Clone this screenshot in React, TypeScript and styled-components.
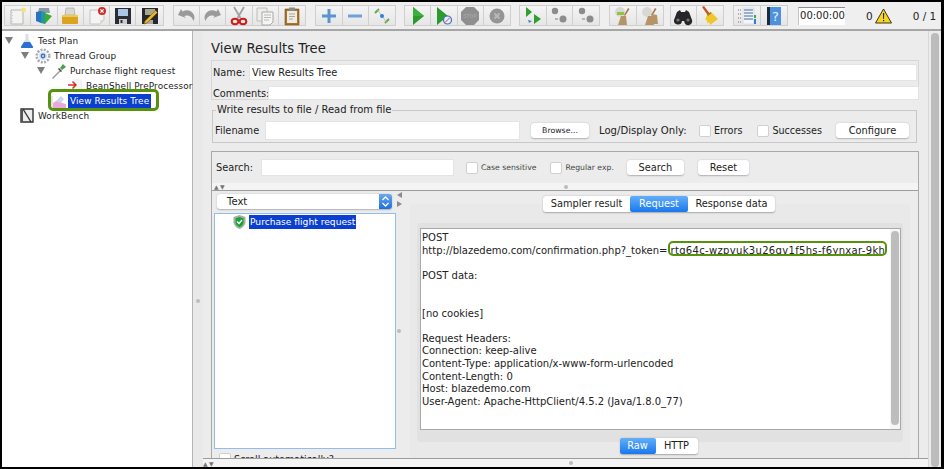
import React from "react";
import styled, { createGlobalStyle } from "styled-components";

const GlobalStyle = createGlobalStyle`
  html, body { margin: 0; padding: 0; background: #000; }
  * { box-sizing: border-box; }
`;

const uiFont = `"DejaVu Sans", "Liberation Sans", sans-serif`;

/* ---------- toolbar icons ---------- */
const IconSvg = styled.svg`
  width: 20px;
  height: 20px;
  display: block;
`;

function Ic({ children }: { children: React.ReactNode }) {
  return <IconSvg viewBox="0 0 20 20">{children}</IconSvg>;
}

const NewIcon = () => (
  <Ic>
    <path d="M3 4h12v14H3z" fill="#f3f3f1" stroke="#b5b5b0" />
    <path d="M4.5 6v10" stroke="#d0d0cc" strokeDasharray="1 2" />
    <circle cx="15.5" cy="4" r="2.4" fill="#f6e27a" />
  </Ic>
);
const TemplatesIcon = () => (
  <Ic>
    <path d="M5 2h10l1 5H4z" fill="#8d9aa5" />
    <path d="M2 6l5-1v12l-5-2z" fill="#2d6fc0" />
    <path d="M7 5l4 1v12l-4-1z" fill="#1f9a9c" />
    <path d="M11 7l7 3-7 8z" fill="#3cab2e" />
  </Ic>
);
const OpenIcon = () => (
  <Ic>
    <path d="M6 2h8l1 7H5z" fill="#d8d8d4" stroke="#a0a09a" strokeWidth=".6" />
    <path d="M2 9h16v8a1 1 0 0 1-1 1H3a1 1 0 0 1-1-1z" fill="#dba41e" />
    <path d="M2 9h16v2H2z" fill="#f0c94f" />
  </Ic>
);
const CloseIcon = () => (
  <Ic>
    <path d="M3 4h14v10l-4 4H3z" fill="#f4f4f2" stroke="#c4c4c0" />
    <path d="M13 18l.5-4H17z" fill="#d8d8d4" />
    <circle cx="15" cy="5" r="4" fill="#cf2b27" />
    <path d="M13.4 3.4l3.2 3.2M16.6 3.4l-3.2 3.2" stroke="#fff" strokeWidth="1.3" />
  </Ic>
);
const SaveIcon = () => (
  <Ic>
    <path d="M2 2h16v16H2z" fill="#2a2d33" />
    <path d="M5 3h10v7H5z" fill="#a9c6e4" />
    <path d="M6 13h8v5H6z" fill="#c9cbce" />
    <path d="M7.5 14h2v3h-2z" fill="#2a2d33" />
  </Ic>
);
const SaveAsIcon = () => (
  <Ic>
    <path d="M2 2h16v16H2z" fill="#26282c" />
    <path d="M5 3h10v6H5z" fill="#a9a68e" />
    <path d="M6 14h7v4H6z" fill="#a8a8a4" />
    <path d="M15.5 4.5l2 2L7 17l-3 1 1-3z" fill="#e8b52c" stroke="#7a5b0d" strokeWidth=".6" />
  </Ic>
);
const UndoIcon = ({ flip }: { flip?: boolean }) => (
  <Ic>
    <path
      transform={flip ? "matrix(-1 0 0 1 20 0)" : undefined}
      d="M2 9l3-6 1.500 2.500C11 3 16 4.500 18 9c.8 2 .5 4-.5 6-1-3-3-5-5.500-5.500-1.500-.3-2.800 0-3.800.6L10 12z"
      fill="#9a9a9a"
    />
  </Ic>
);
const CutIcon = () => (
  <Ic>
    <path d="M5 1l6.500 11M15 1L8.500 12" stroke="#9ea2a6" strokeWidth="1.800" />
    <ellipse cx="6" cy="15.500" rx="3.300" ry="2.700" fill="none" stroke="#c8201c" strokeWidth="2" />
    <ellipse cx="14" cy="15.500" rx="3.300" ry="2.700" fill="none" stroke="#c8201c" strokeWidth="2" />
  </Ic>
);
const CopyIcon = () => (
  <Ic>
    <path d="M2 2h10v13H2z" fill="#ededeb" stroke="#bcbcb8" />
    <path d="M7 6h11v10l-3 3H7z" fill="#f5f5f3" stroke="#a8a8a4" />
    <path d="M9 9h7M9 11.500h7M9 14h5" stroke="#b8b8b4" />
  </Ic>
);
const PasteIcon = () => (
  <Ic>
    <path d="M3 3h14v16H3z" fill="#a9732a" stroke="#7c5118" strokeWidth=".6" />
    <path d="M5 5h10v12H5z" fill="#ecebe4" />
    <path d="M7 1.500h6V5H7z" fill="#8a8a86" />
    <path d="M7 8h6M7 10.500h6M7 13h4" stroke="#a8a8a2" />
  </Ic>
);
const PlusIcon = () => (
  <Ic>
    <path d="M8.500 3h3v5.500H17v3h-5.500V17h-3v-5.500H3v-3h5.500z" fill="#5b93cf" />
  </Ic>
);
const MinusIcon = () => (
  <Ic>
    <path d="M3 8.500h14v3H3z" fill="#6ea1d6" />
  </Ic>
);
const ToggleIcon = () => (
  <Ic>
    <path d="M3 7L7 3M13 17l4-4" stroke="#64a84e" strokeWidth="2" fill="none" />
    <path d="M5 3L15 17" stroke="#b4b8b4" strokeWidth=".8" fill="none" />
    <circle cx="10" cy="10" r="2" fill="#2f7fe0" />
  </Ic>
);
const PlayIcon = () => (
  <Ic>
    <path d="M5 1l11 9-11 9z" fill="#2c9a2c" />
    <path d="M5 1l11 9H5z" fill="#3bb13b" />
  </Ic>
);
const PlayNoTimerIcon = () => (
  <Ic>
    <path d="M3 1l11 9-11 9z" fill="#2c9a2c" />
    <circle cx="13.500" cy="14" r="4" fill="#e8eef8" stroke="#3a6fc4" strokeWidth="1.200" />
    <path d="M11 16.500l5-5" stroke="#d04040" strokeWidth="1" />
  </Ic>
);
const StopIcon = () => (
  <Ic>
    <path d="M6 1h8l5 5v8l-5 5H6l-5-5V6z" fill="#8f8f8f" />
    <text x="10" y="12" fontSize="5" fontWeight="700" fill="#a4a4a4" textAnchor="middle" fontFamily="Liberation Sans">
      STOP
    </text>
  </Ic>
);
const ShutdownIcon = () => (
  <Ic>
    <circle cx="10" cy="10" r="7.500" fill="#959595" />
    <path d="M7.500 7.500l5 5M12.500 7.500l-5 5" stroke="#b8b8b8" strokeWidth="2" />
  </Ic>
);
const RemoteStartIcon = () => (
  <Ic>
    <path d="M3 1l6 5-6 5zM11 8l7 5-7 5z" fill="#2f9f2f" />
    <path d="M5 14l4 1-3 2z" fill="#4b7fc4" />
  </Ic>
);
const RemoteStopIcon = () => (
  <Ic>
    <circle cx="6" cy="5" r="3.200" fill="#8c8c8c" />
    <circle cx="14" cy="13" r="3.500" fill="#8c8c8c" />
    <path d="M6 13h3" stroke="#a8a8a8" strokeWidth="1.600" />
  </Ic>
);
const BroomGearIcon = ({ tall }: { tall?: boolean }) => (
  <Ic>
    <circle cx="7" cy="6" r="5" fill="#d8d8d4" />
    {!tall && <path d="M4 6h7v3H4z" fill="#8cc63f" />}
    <path d="M15 2l1.500 1L12 10l-1-1z" fill="#a5794a" />
    <path d="M8 10l5 0 1 9H5z" fill="#b79468" />
    {tall && <path d="M12 8l5 1 1 9h-5z" fill="#b79468" />}
  </Ic>
);
const BinocularsIcon = () => (
  <Ic>
    <path d="M4 6l3-2 1 2h4l1-2 3 2 3 8a4 4 0 1 1-7.800 1H9a4 4 0 1 1-8-1z" fill="#26262a" />
    <circle cx="5" cy="14" r="1.600" fill="#77797e" />
    <circle cx="15" cy="14" r="1.600" fill="#77797e" />
  </Ic>
);
const BroomIcon = () => (
  <Ic>
    <path d="M2 1l2-1 6 8-2 1.500z" fill="#c4541f" />
    <path d="M7 9l4-3 7 7-8 6-1-3-1.500 1.500-1-4-1.500.5z" fill="#efc72b" />
    <path d="M7 8.500l3.500-2.500 1 1.300-3.500 2.600z" fill="#b7701f" />
  </Ic>
);
const ListIcon = () => (
  <Ic>
    <path d="M1 4h3M1 8h3M1 12h3M1 16h3" stroke="#9a9a9a" strokeWidth="1.500" strokeDasharray="1 1" />
    <path d="M6 2h11v16H6z" fill="#f4f6f8" stroke="#c4c8cc" strokeWidth=".5" />
    <path d="M7 4h9M7 7h9M7 10h9M7 13h9" stroke="#3f67a8" strokeWidth="1.200" />
    <path d="M17 13h2v5h-2z" fill="#2b7fd8" />
    <path d="M17 9h2v3h-2z" fill="#48a838" />
  </Ic>
);
const HelpIcon = () => (
  <Ic>
    <path d="M3 1h3v18H3z" fill="#1c2a3c" />
    <path d="M6 1h11v18H6z" fill="#4d90dc" />
    <text x="11.500" y="15" fontSize="13" fill="#e6f0fa" textAnchor="middle" fontFamily="DejaVu Sans">?</text>
  </Ic>
);
const WarnIcon = () => (
  <svg width="17" height="16" viewBox="0 0 17 16">
    <path d="M8.500 1L16.500 15H.5z" fill="#f5d327" stroke="#3a3410" strokeWidth="1" strokeLinejoin="round" />
    <path d="M8 5h1.200l-.2 6h-.8zM8 12h1.200v1.300H8z" fill="#222" />
  </svg>
);

/* ---------- tree icons ---------- */
const FlaskIcon = () => (
  <svg width="14" height="14" viewBox="0 0 14 14">
    <path d="M5.500 0h3v5l4 7a1 1 0 0 1-1 2h-9a1 1 0 0 1-1-2l4-7z" fill="#d9dfe8" />
    <path d="M4 8h6l2.500 4a1 1 0 0 1-1 2h-9a1 1 0 0 1-1-2z" fill="#2d6fd0" />
  </svg>
);
const GearIcon = () => (
  <svg width="16" height="16" viewBox="0 0 16 16">
    <circle cx="8" cy="8" r="6.300" fill="none" stroke="#a6adb5" strokeWidth="2.600" strokeDasharray="2 1.300" />
    <circle cx="8" cy="8" r="4" fill="#dbe2ea" />
    <circle cx="8" cy="8" r="2.400" fill="#3c73b8" />
    <circle cx="8" cy="8" r="1" fill="#dbe6f4" />
  </svg>
);
const DropperIcon = () => (
  <svg width="16" height="16" viewBox="0 0 16 16">
    <path d="M1 15l8-8 1 1-8 8z" fill="#9a9a9a" />
    <path d="M9 5l3-4 3 3-4 3z" fill="#4f9e50" />
    <path d="M8 5l3 3-1 1-3-3z" fill="#3c4a3c" />
  </svg>
);
const PreIcon = () => (
  <svg width="16" height="16" viewBox="0 0 16 16">
    <path d="M6 1h9v14H6z" fill="#f3f3f3" />
    <path d="M1 7h7M5.500 3.500L9 7l-3.500 3.500" stroke="#d4312c" strokeWidth="1.500" fill="none" />
  </svg>
);
const ResultsIcon = () => (
  <svg width="16" height="16" viewBox="0 0 16 16">
    <path d="M1 15V3" stroke="#c9c9c9" />
    <path d="M2 15V10l5-3 4 3 4 1v4z" fill="#e9a8dc" />
    <path d="M5 8l5-5 3 3-3 4z" fill="#c8d8ee" />
  </svg>
);
const BenchIcon = () => (
  <svg width="14" height="15" viewBox="0 0 14 15">
    <path d="M1 1h12v13H1z" fill="#eee" stroke="#333" strokeWidth="1.400" />
    <path d="M3 1l8 13" stroke="#333" strokeWidth="1.400" />
    <path d="M1 1l2 0v13H1z" fill="#555" />
  </svg>
);
const ShieldIcon = () => (
  <svg width="13" height="14" viewBox="0 0 13 14">
    <path d="M6.500 0l6 2v5c0 3-3 6-6 7-3-1-6-4-6-7V2z" fill="#a8aca8" />
    <path d="M6.500 2l4 1.400v3.800c0 2-2 4-4 5-2-1-4-3-4-5V3.400z" fill="#16a52e" />
    <path d="M4 6.500l2 2 3-3.500" stroke="#fff" strokeWidth="1.400" fill="none" />
  </svg>
);

/* ---------- page ---------- */
const Frame = styled.div`
  position: relative;
  width: 944px;
  height: 469px;
  padding: 2px 3px 2px 2px;
  background: #000;
  overflow: hidden;
  display: flex;
  flex-direction: column;
  font-family: ${uiFont};
  color: #222;
`;

const Toolbar = styled.div`
  height: 29px;
  flex: none;
  display: flex;
  align-items: center;
  padding-left: 2px;
  background: #efefef;
  border-bottom: 2px solid #a6a6a6;
`;

const ToolGroup = styled.div`
  display: flex;
  height: 21px;
  border: 1px solid #cfcfcf;
  background: #e9e9e9;
`;

const ToolButton = styled.div`
  width: 26.300px;
  display: flex;
  align-items: center;
  justify-content: center;
  border-right: 1px solid #cfcfcf;
  background: linear-gradient(#f4f4f4, #e6e6e6);
  &:last-child {
    border-right: none;
  }
`;

const ToolSep = styled.div<{ $w: number }>`
  width: ${(p) => p.$w}px;
  height: 20px;
  flex: none;
  background: radial-gradient(circle, #bdbdbd 0.6px, transparent 0.7px) center top / 2px 2px repeat-y;
`;

const Timer = styled.div`
  width: 47px;
  height: 18px;
  margin-left: 10px;
  background: #fff;
  border-top: 1px solid #8e8e8e;
  border-left: 1px solid #c4c4c4;
  font-size: 10px;
  line-height: 16px;
  padding-left: 1px;
`;

const Counter = styled.span<{ $ml: number }>`
  font-size: 10.500px;
  margin-left: ${(p) => p.$ml}px;
  white-space: nowrap;
`;

const WarnSlot = styled.div`
  margin-left: 2px;
  display: flex;
`;

const Body = styled.div`
  flex: 1;
  min-height: 0;
  display: flex;
`;

const TreePane = styled.div`
  width: 191px;
  flex: none;
  background: #fff;
  padding-top: 2px;
  border-right: 1px solid #b4b4b4;
`;

const TreeRow = styled.div<{ $level: number }>`
  height: 15px;
  display: flex;
  align-items: center;
  padding-left: ${(p) => 3 + p.$level * 16}px;
  font-size: 8.900px;
  letter-spacing: 0.12px;
  white-space: nowrap;
`;

const Arrow = styled.span<{ $hidden?: boolean }>`
  width: 0;
  height: 0;
  flex: none;
  border-left: 4px solid transparent;
  border-right: 4px solid transparent;
  border-top: 7px solid ${(p) => (p.$hidden ? "transparent" : "#7d7d7d")};
`;

const TreeIconSlot = styled.span`
  width: 16px;
  flex: none;
  margin-left: 6px;
  display: flex;
  justify-content: center;
`;

const TreeLabel = styled.span<{ $selected?: boolean }>`
  margin-left: ${(p) => (p.$selected ? "1px" : "3px")};
  padding: 0 ${(p) => (p.$selected ? "2px" : "0")};
  line-height: 14px;
  background: ${(p) => (p.$selected ? "#0a3fd0" : "transparent")};
  color: ${(p) => (p.$selected ? "#fff" : "#222")};
`;

const SideGap = styled.div`
  width: 10px;
  flex: none;
  background: #e9e9e9;
  display: flex;
  align-items: center;
  justify-content: center;
  padding-top: 104px;
`;

const Dot = styled.span`
  width: 4px;
  height: 4px;
  border-radius: 50%;
  flex: none;
  background: #bcbcbc;
`;

const Main = styled.div`
  flex: 1;
  min-width: 0;
  display: flex;
  flex-direction: column;
  background: #ececec;
  padding-left: 8px;
`;

const Title = styled.div`
  height: 21px;
  margin-top: 7px;
  font-size: 13.200px;
  line-height: 21px;
`;

const NameBox = styled.div`
  width: 708px;
  height: 40px;
  margin-top: 1px;
  padding: 4px 0 0 1px;
  border: 1px solid #d6d6d6;
  display: flex;
  flex-direction: column;
  gap: 7px;
`;

const NameRow = styled.div<{ $h: number; $mr?: number }>`
  display: flex;
  align-items: center;
  font-size: 9.800px;
  height: ${(p) => p.$h}px;
  flex: none;
  margin-right: ${(p) => p.$mr ?? 0}px;
`;

const RowLabel = styled.span<{ $w: number; $ml?: number; $size?: number }>`
  width: ${(p) => p.$w}px;
  flex: none;
  margin-left: ${(p) => p.$ml ?? 0}px;
  font-size: ${(p) => p.$size ?? 9.8}px;
  white-space: nowrap;
`;

const TextInput = styled.div<{ $w?: number; $h?: number }>`
  flex: ${(p) => (p.$w ? "none" : "1")};
  width: ${(p) => (p.$w ? `${p.$w}px` : "auto")};
  height: ${(p) => p.$h ?? 15}px;
  line-height: ${(p) => p.$h ?? 15}px;
  background: #fff;
  padding-left: 2px;
  font-size: 9.800px;
  box-shadow: 0 0 0 1px #e4e4e4;
  white-space: nowrap;
`;

const FileSet = styled.fieldset`
  width: 705px;
  height: 39px;
  margin: 4px 0 0 1px;
  padding: 6px 0 0 2px;
  border: 1px solid #c8c8c8;
  display: flex;
  align-items: center;
  font-size: 9.800px;
  min-inline-size: 0;
  legend {
    margin-left: 1px;
    padding: 0 1px;
    font-size: 10px;
    line-height: 12px;
  }
`;

const Check = styled.span<{ $ml: number }>`
  width: 12px;
  height: 12px;
  flex: none;
  margin-left: ${(p) => p.$ml}px;
  background: #fff;
  border: 1px solid #d0d0d0;
  border-radius: 2px;
`;

const CheckText = styled.span<{ $small?: boolean }>`
  margin-left: 3px;
  white-space: nowrap;
  font-size: ${(p) => (p.$small ? "7.700px" : "9.600px")};
  color: ${(p) => (p.$small ? "#444" : "#222")};
`;

const PlainButton = styled.div<{ $w: number; $ml: number; $small?: boolean }>`
  width: ${(p) => p.$w}px;
  height: 15px;
  flex: none;
  margin-left: ${(p) => p.$ml}px;
  margin-bottom: 1px;
  background: #fff;
  border-radius: 3px;
  box-shadow: 0 0.5px 1.500px #b0b0b0;
  text-align: center;
  line-height: 15px;
  font-size: ${(p) => (p.$small ? "7.800px" : "9.800px")};
`;

const SearchPanel = styled.div`
  width: 708px;
  flex: 1;
  min-height: 0;
  margin-top: 8px;
  border: 1px solid #a9a9a9;
  border-bottom: none;
  display: flex;
  flex-direction: column;
`;

const SearchBar = styled.div`
  height: 31px;
  flex: none;
  display: flex;
  align-items: center;
  padding-left: 4px;
  font-size: 9.800px;
`;

const HSplit = styled.div`
  height: 7px;
  flex: none;
  display: flex;
  align-items: center;
  background: #f4f4f4;
  padding-left: 2px;
  box-sizing: content-box;
  border-bottom: 1px solid #9c9c9c;
`;

const SplitArrows = styled.span`
  font-size: 6px;
  line-height: 7px;
  letter-spacing: 1.500px;
  color: #777;
  white-space: nowrap;
`;

const SplitDot = styled(Dot)`
  margin-left: 338px;
`;

const Lower = styled.div`
  flex: 1;
  min-height: 0;
  display: flex;
  overflow: hidden;
`;

const LeftCol = styled.div`
  width: 184px;
  flex: none;
  padding: 3px 0 0 2px;
  display: flex;
  flex-direction: column;
`;

const Combo = styled.div`
  width: 175px;
  height: 15px;
  margin-left: 3px;
  flex: none;
  display: flex;
  align-items: center;
  justify-content: space-between;
  background: #fff;
  border-radius: 3px;
  box-shadow: 0 0.5px 1.500px #b0b0b0;
  font-size: 10px;
  padding-left: 10px;
`;

const ComboStepper = styled.span`
  width: 13px;
  height: 15px;
  background: linear-gradient(#6aa9f0, #1f6fe0);
  border-radius: 0 3px 3px 0;
  display: flex;
  align-items: center;
  justify-content: center;
`;

const ResultList = styled.div`
  width: 182px;
  height: 236px;
  flex: none;
  margin-top: 4px;
  background: #fff;
  border: 1px solid #8fbdec;
  padding: 1px 0 0 18px;
  display: flex;
  align-items: flex-start;
  font-size: 9.150px;
`;

const ResultLabel = styled.span`
  margin-left: 3px;
  padding: 0 1px;
  line-height: 14px;
  background: #0a3fd0;
  color: #fff;
  white-space: nowrap;
`;

const ClippedRow = styled.div`
  display: flex;
  align-items: center;
  margin-top: 4px;
  white-space: nowrap;
  flex: none;
`;

const ColGap = styled.div`
  width: 6px;
  flex: none;
  display: flex;
  flex-direction: column;
  align-items: center;
  padding-top: 1px;
`;

const SideArrow = styled.span<{ $dir: "l" | "r" }>`
  width: 0;
  height: 0;
  flex: none;
  margin-bottom: 3px;
  border-top: 3px solid transparent;
  border-bottom: 3px solid transparent;
  border-${(p) => (p.$dir === "l" ? "right" : "left")}: 5px solid #8c8c8c;
`;

const ColDot = styled(Dot)`
  margin-top: 119px;
`;

const RightCol = styled.div`
  flex: 1;
  min-width: 0;
  display: flex;
  flex-direction: column;
  align-items: flex-start;
  padding-top: 5px;
`;

const Segmented = styled.div<{ $h: number }>`
  display: flex;
  flex: none;
  height: ${(p) => p.$h}px;
  background: #fff;
  border-radius: 3px;
  box-shadow: 0 0.5px 1.500px #a8a8a8;
  font-size: 9.800px;
  position: relative;
  z-index: 1;
`;

const TabStrip = styled(Segmented)`
  margin-left: 141px;
`;

const Segment = styled.div<{ $w: number; $on?: boolean }>`
  width: ${(p) => p.$w}px;
  text-align: center;
  line-height: 15px;
  color: ${(p) => (p.$on ? "#fff" : "#222")};
  background: ${(p) => (p.$on ? "linear-gradient(#62aef8, #1a78ee)" : "transparent")};
  border-radius: 2px;
`;

const TabBody = styled.div`
  width: 500px;
  flex: none;
  margin: -8px 0 0 8px;
  padding: 19px 7px 0;
  background: #e9e9e9;
  border-radius: 4px;
  height: 255px;
`;

const InnerGroup = styled.div`
  height: 219px;
  padding: 5px 2px 0 3px;
  background: #e1e1e1;
  border-radius: 4px;
`;

const TextArea = styled.div`
  height: 202px;
  background: #fff;
  border: 1px solid #a8a8a8;
  display: flex;
`;

const Lines = styled.pre`
  flex: 1;
  min-width: 0;
  margin: 0;
  padding: 3px 0 0 1px;
  font-family: ${uiFont};
  font-size: 10px;
  line-height: 12.600px;
  white-space: pre;
  overflow: hidden;
`;

const Token = styled.span`
  margin-left: 3px;
  letter-spacing: 0.33px;
`;

const AreaScroll = styled.div`
  width: 10px;
  flex: none;
  padding: 2px 1px 4px 1px;
  background: #f6f6f6;
  &::after {
    content: "";
    display: block;
    height: 100%;
    border-radius: 4px;
    background: #bdbdbd;
  }
`;

const RawBar = styled.div`
  display: flex;
  justify-content: center;
  margin: 8px 4px 0 0;
`;

const BottomStrip = styled.div`
  height: 9px;
  flex: none;
  display: flex;
  align-items: center;
  background: #f4f4f4;
  border-top: 1px solid #9c9c9c;
  margin-left: -8px;
`;

const BottomDot = styled(Dot)`
  margin-left: 354px;
`;

const OuterScroll = styled.div`
  width: 13px;
  flex: none;
  padding: 2px 2px 0 2px;
  background: #ececec;
  border-left: 1px solid #d8d8d8;
  &::after {
    content: "";
    display: block;
    height: 100%;
    border-radius: 4px;
    background: #bcbcbc;
  }
`;

const Annotation = styled.div<{ $x: number; $y: number; $w: number; $h: number; $t: number }>`
  position: absolute;
  left: ${(p) => p.$x}px;
  top: ${(p) => p.$y}px;
  width: ${(p) => p.$w}px;
  height: ${(p) => p.$h}px;
  border: ${(p) => p.$t}px solid #57920f;
  border-radius: 5px;
`;

const groups: React.ReactNode[][] = [
  [<NewIcon />, <TemplatesIcon />, <OpenIcon />, <CloseIcon />, <SaveIcon />, <SaveAsIcon />],
  [<UndoIcon />, <UndoIcon flip />, <CutIcon />, <CopyIcon />, <PasteIcon />],
  [<PlusIcon />, <MinusIcon />, <ToggleIcon />],
  [<PlayIcon />, <PlayNoTimerIcon />, <StopIcon />, <ShutdownIcon />],
  [<RemoteStartIcon />, <RemoteStopIcon />, <RemoteStopIcon />],
  [<BroomGearIcon />, <BroomGearIcon tall />],
  [<BinocularsIcon />, <BroomIcon />],
  [<ListIcon />, <HelpIcon />],
];
const gaps = [9, 9, 8, 8, 9, 6, 9];

const requestHead = `POST
http://blazedemo.com/confirmation.php?_token=`;

const requestTail = `

POST data:


[no cookies]

Request Headers:
Connection: keep-alive
Content-Type: application/x-www-form-urlencoded
Content-Length: 0
Host: blazedemo.com
User-Agent: Apache-HttpClient/4.5.2 (Java/1.8.0_77)`;

export default function App() {
  return (
    <>
      <GlobalStyle />
      <Frame>
        <Toolbar>
          {groups.map((icons, i) => (
            <React.Fragment key={i}>
              {i > 0 && <ToolSep $w={gaps[i - 1]} />}
              <ToolGroup>
                {icons.map((icon, j) => (
                  <ToolButton key={j}>{icon}</ToolButton>
                ))}
              </ToolGroup>
            </React.Fragment>
          ))}
          <Timer>00:00:00</Timer>
          <Counter $ml={21}>0</Counter>
          <WarnSlot>
            <WarnIcon />
          </WarnSlot>
          <Counter $ml={21}>0 / 1</Counter>
        </Toolbar>
        <Body>
          <TreePane>
            <TreeRow $level={0}>
              <Arrow />
              <TreeIconSlot>
                <FlaskIcon />
              </TreeIconSlot>
              <TreeLabel>Test Plan</TreeLabel>
            </TreeRow>
            <TreeRow $level={1}>
              <Arrow />
              <TreeIconSlot>
                <GearIcon />
              </TreeIconSlot>
              <TreeLabel>Thread Group</TreeLabel>
            </TreeRow>
            <TreeRow $level={2}>
              <Arrow />
              <TreeIconSlot>
                <DropperIcon />
              </TreeIconSlot>
              <TreeLabel>Purchase flight request</TreeLabel>
            </TreeRow>
            <TreeRow $level={3}>
              <Arrow $hidden />
              <TreeIconSlot>
                <PreIcon />
              </TreeIconSlot>
              <TreeLabel>BeanShell PreProcessor</TreeLabel>
            </TreeRow>
            <TreeRow $level={2}>
              <Arrow $hidden />
              <TreeIconSlot>
                <ResultsIcon />
              </TreeIconSlot>
              <TreeLabel $selected>View Results Tree</TreeLabel>
            </TreeRow>
            <TreeRow $level={0}>
              <Arrow $hidden />
              <TreeIconSlot>
                <BenchIcon />
              </TreeIconSlot>
              <TreeLabel>WorkBench</TreeLabel>
            </TreeRow>
          </TreePane>
          <SideGap>
            <Dot />
          </SideGap>
          <Main>
            <Title>View Results Tree</Title>
            <NameBox>
              <NameRow $h={15} $mr={2}>
                <RowLabel $w={37}>Name:</RowLabel>
                <TextInput>View Results Tree</TextInput>
              </NameRow>
              <NameRow $h={12}>
                <RowLabel $w={56}>Comments:</RowLabel>
                <TextInput $h={12} />
              </NameRow>
            </NameBox>
            <FileSet>
              <legend>Write results to file / Read from file</legend>
              <RowLabel $w={51}>Filename</RowLabel>
              <TextInput $w={253} $h={17} />
              <PlainButton $w={58} $ml={12} $small>
                Browse...
              </PlainButton>
              <RowLabel $w={90} $ml={10} $size={10.1}>
                Log/Display Only:
              </RowLabel>
              <Check $ml={10} />
              <CheckText>Errors</CheckText>
              <Check $ml={15} />
              <CheckText>Successes</CheckText>
              <PlainButton $w={73} $ml={14}>
                Configure
              </PlainButton>
            </FileSet>
            <SearchPanel>
              <SearchBar>
                <RowLabel $w={46}>Search:</RowLabel>
                <TextInput $w={191} />
                <Check $ml={13} />
                <CheckText $small>Case sensitive</CheckText>
                <Check $ml={14} />
                <CheckText $small>Regular exp.</CheckText>
                <PlainButton $w={57} $ml={13}>
                  Search
                </PlainButton>
                <PlainButton $w={51} $ml={14}>
                  Reset
                </PlainButton>
              </SearchBar>
              <HSplit>
                <SplitArrows>▲▼</SplitArrows>
                <SplitDot />
              </HSplit>
              <Lower>
                <LeftCol>
                  <Combo>
                    Text
                    <ComboStepper>
                      <svg width="9" height="13" viewBox="0 0 9 13">
                        <path d="M1.500 5L4.500 2l3 3M1.500 8l3 3 3-3" stroke="#fff" strokeWidth="1.300" fill="none" />
                      </svg>
                    </ComboStepper>
                  </Combo>
                  <ResultList>
                    <ShieldIcon />
                    <ResultLabel>Purchase flight request</ResultLabel>
                  </ResultList>
                  <ClippedRow>
                    <Check $ml={5} />
                    <CheckText>Scroll automatically?</CheckText>
                  </ClippedRow>
                </LeftCol>
                <ColGap>
                  <SideArrow $dir="l" />
                  <SideArrow $dir="r" />
                  <ColDot />
                </ColGap>
                <RightCol>
                  <TabStrip $h={16}>
                    <Segment $w={87}>Sampler result</Segment>
                    <Segment $w={58} $on>
                      Request
                    </Segment>
                    <Segment $w={87}>Response data</Segment>
                  </TabStrip>
                  <TabBody>
                    <InnerGroup>
                      <TextArea>
                        <Lines>
                          {requestHead}
                          <Token>rtq64c-wzpvuk3u26qv1f5hs-f6ynxar-9kh</Token>
                          {requestTail}
                        </Lines>
                        <AreaScroll />
                      </TextArea>
                      <RawBar>
                        <Segmented $h={16}>
                          <Segment $w={36} $on>
                            Raw
                          </Segment>
                          <Segment $w={42}>HTTP</Segment>
                        </Segmented>
                      </RawBar>
                    </InnerGroup>
                  </TabBody>
                </RightCol>
              </Lower>
            </SearchPanel>
            <BottomStrip>
              <SplitArrows>▲▼</SplitArrows>
              <BottomDot />
            </BottomStrip>
          </Main>
          <OuterScroll />
        </Body>
        <Annotation $x={48} $y={89} $w={111} $h={22} $t={3} />
        <Annotation $x={668} $y={241} $w={219} $h={15} $t={2} />
      </Frame>
    </>
  );
}
